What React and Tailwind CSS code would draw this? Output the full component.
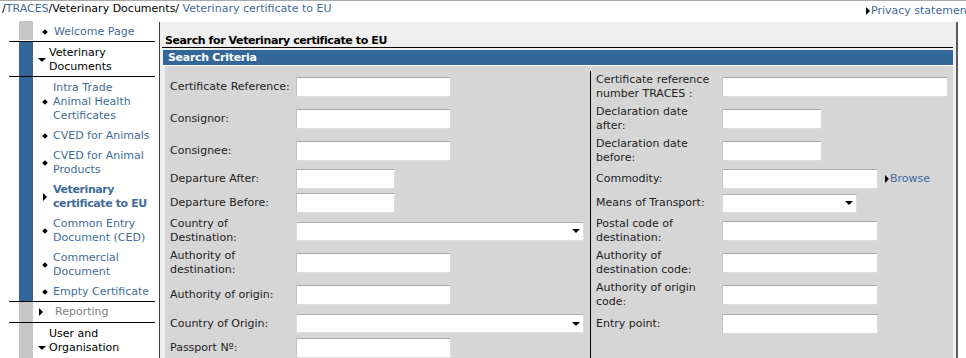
import React from 'react'

const link = 'text-[#3f6c9a]'

function Diamond() {
  return <span className="block w-[4px] h-[4px] bg-black rotate-45" />
}
function Down() {
  return <span className="block w-0 h-0 border-x-[4px] border-t-[4px] border-x-transparent border-t-black" />
}
function Right() {
  return <span className="block w-0 h-0 border-y-[4px] border-l-[4px] border-y-transparent border-l-black" />
}

function SubItem({ lines, active }) {
  return (
    <div className="flex items-center pl-[8px]">
      <span className="w-[8px] flex justify-center">{active ? <Right /> : <Diamond />}</span>
      <span className={`ml-[4px] ${link} ${active ? 'font-bold text-[#2f5b88] tracking-[-0.4px]' : ''}`}>
        {lines.map((l, i) => <div key={i}>{l}</div>)}
      </span>
    </div>
  )
}

function Sidebar() {
  return (
    <div className="ml-[9px] w-[146px] shrink-0 flex flex-col">
      <div className="flex h-[21px] border-b border-black">
        <div className="w-[10px]" />
        <div className="w-[14px] bg-[#c6c6c6] mb-[1px]" />
        <div className="flex-1 flex items-center pl-[8px] pt-[1px]">
          <span className="w-[8px] flex justify-center"><Diamond /></span>
          <span className={`ml-[5px] ${link}`}>Welcome Page</span>
        </div>
      </div>
      <div className="flex h-[35px] border-b border-black">
        <div className="w-[10px]" />
        <div className="w-[14px] bg-[#336699]" />
        <div className="flex-1 flex items-center pl-[5px] pt-[1px]">
          <Down />
          <span className="ml-[3px] text-black">Veterinary<br />Documents</span>
        </div>
      </div>
      <div className="flex h-[225px] border-b border-black">
        <div className="w-[10px]" />
        <div className="w-[14px] bg-[#336699]" />
        <div className="flex-1 flex flex-col gap-[6px] pt-[4px]">
          <SubItem lines={['Intra Trade', 'Animal Health', 'Certificates']} />
          <SubItem lines={['CVED for Animals']} />
          <SubItem lines={['CVED for Animal', 'Products']} />
          <SubItem lines={['Veterinary', 'certificate to EU']} active />
          <SubItem lines={['Common Entry', 'Document (CED)']} />
          <SubItem lines={['Commercial', 'Document']} />
          <SubItem lines={['Empty Certificate']} />
        </div>
      </div>
      <div className="flex h-[21px] border-b border-black">
        <div className="w-[10px]" />
        <div className="w-[14px] bg-[#c6c6c6]" />
        <div className="flex-1 flex items-center pl-[6px]">
          <Right />
          <span className="ml-[12px] text-[#808080]">Reporting</span>
        </div>
      </div>
      <div className="flex h-[40px]">
        <div className="w-[10px]" />
        <div className="w-[14px] bg-[#c6c6c6]" />
        <div className="flex-1 flex items-end pl-[5px] pt-[4px] self-start">
          <span className="mb-[5px]"><Down /></span>
          <span className="ml-[3px] text-black">User and<br />Organisation</span>
        </div>
      </div>
    </div>
  )
}

function Input({ w }) {
  return <div className="h-[20px] bg-white border border-[#dcdcdc] border-t-[#a9a9a9] border-l-[#c4c4c4]" style={{ width: w }} />
}
function Select({ w }) {
  return (
    <div className="h-[19px] bg-white border border-[#dcdcdc] border-t-[#b0b0b0] flex items-center justify-end pr-[3px]" style={{ width: w }}>
      <Down />
    </div>
  )
}

const rows = [
  { h: 32, l: ['Certificate Reference:'], li: <Input w={155} />, r: ['Certificate reference', 'number TRACES :'], ri: <Input w={226} /> },
  { h: 32, l: ['Consignor:'], li: <Input w={155} />, r: ['Declaration date', 'after:'], ri: <Input w={100} /> },
  { h: 32, l: ['Consignee:'], li: <Input w={155} />, r: ['Declaration date', 'before:'], ri: <Input w={100} /> },
  {
    h: 24, l: ['Departure After:'], li: <Input w={99} />, r: ['Commodity:'],
    ri: (
      <div className="flex items-center">
        <Input w={156} />
        <span className="ml-[7px]"><Right /></span>
        <span className={`ml-[1px] ${link}`}>Browse</span>
      </div>
    ),
  },
  { h: 24, l: ['Departure Before:'], li: <Input w={99} />, r: ['Means of Transport:'], ri: <Select w={135} /> },
  { h: 32, l: ['Country of', 'Destination:'], li: <Select w={288} />, r: ['Postal code of', 'destination:'], ri: <Input w={156} /> },
  { h: 32, l: ['Authority of', 'destination:'], li: <Input w={155} />, r: ['Authority of', 'destination code:'], ri: <Input w={156} /> },
  { h: 32, l: ['Authority of origin:'], li: <Input w={155} />, r: ['Authority of origin', 'code:'], ri: <Input w={156} /> },
  { h: 25, l: ['Country of Origin:'], li: <Select w={288} />, r: ['Entry point:'], ri: <Input w={156} /> },
  { h: 24, l: ['Passport Nº:'], li: <Input w={155} />, r: [], ri: null },
]

function Form() {
  return (
    <div className="ml-[5px] mr-[3px] bg-[#d6d6d6] pt-[5px] pb-[10px] text-[#222]">
      {rows.map((row, i) => (
        <div key={i} className="grid grid-cols-[131px_294px_132px_1fr]" style={{ height: row.h }}>
          <div className="flex items-center pl-[5px]">
            <div>{row.l.map((t, j) => <div key={j}>{t}</div>)}</div>
          </div>
          <div className="flex items-center">{row.li}</div>
          <div className="flex items-center pl-[5px] border-l border-black">
            <div>{row.r.map((t, j) => <div key={j}>{t}</div>)}</div>
          </div>
          <div className="flex items-center">{row.ri}</div>
        </div>
      ))}
    </div>
  )
}

export default function App() {
  return (
    <div className="w-[966px] h-[358px] overflow-hidden bg-white font-['DejaVu_Sans',Verdana,sans-serif] text-[11px] leading-[14px] text-black">
      <div className="h-[21px] border-t border-[#a8a8a8] flex justify-between">
        <div className="pl-[2px] pt-[1px] whitespace-nowrap">
          /<span className={link}>TRACES</span>/Veterinary Documents/<span className={link}> Veterinary certificate to EU</span>
        </div>
        <div className="flex items-start pt-[3px] whitespace-nowrap w-[100px] shrink-0">
          <span className="mt-[3px]"><Right /></span>
          <span className={`ml-[1px] ${link}`}>Privacy statement</span>
        </div>
      </div>
      <div className="flex items-start">
        <Sidebar />
        <div className="ml-[4px] mt-[1px] w-[799px] h-[340px] bg-[#efefef] border-l border-[#404040] border-r-2 border-r-[#5a5a5a]">
          <div className="ml-[2px] mr-[3px] h-[26px] pt-[12px] pl-[3px] border-b border-black font-bold text-black tracking-[-0.4px]">
            Search for Veterinary certificate to EU
          </div>
          <div className="ml-[3px] mr-[3px] mt-[2px] h-[16px] bg-[#336699] border-b border-white pl-[5px] font-bold text-white leading-[15px] tracking-[-0.3px]">
            Search Criteria
          </div>
          <Form />
        </div>
      </div>
    </div>
  )
}
